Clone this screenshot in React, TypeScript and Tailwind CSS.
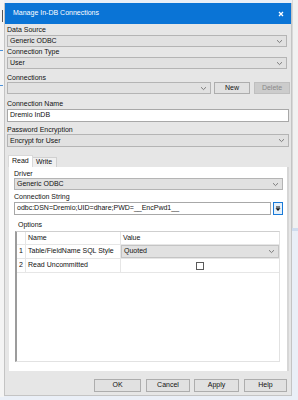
import React from "react";

const Chevron = () => (
  <svg width="7" height="5" viewBox="0 0 7 5" className="shrink-0">
    <path d="M1 1.2 L3.5 3.6 L6 1.2" fill="none" stroke="#707070" strokeWidth="0.9" />
  </svg>
);

const Select = ({ text, className = "" }: { text: string; className?: string }) => (
  <div
    className={`shrink-0 flex items-center justify-between bg-[#e1e1e1] border border-[#b4b4b4] pl-[2px] pr-[3px] ${className}`}
  >
    <span className="leading-[10px] text-[#111] whitespace-nowrap">{text}</span>
    <Chevron />
  </div>
);

const Label = ({ text, className = "" }: { text: string; className?: string }) => (
  <div className={`shrink-0 leading-[9px] h-[9px] text-[#111] whitespace-nowrap ${className}`}>{text}</div>
);

const Btn = ({ text, className = "", disabled = false }: { text: string; className?: string; disabled?: boolean }) => (
  <div
    className={`shrink-0 flex items-center justify-center border ${
      disabled ? "bg-[#cccccc] border-[#bfbfbf] text-[#8a8a8a]" : "bg-[#e1e1e1] border-[#adadad] text-[#111]"
    } ${className}`}
  >
    {text}
  </div>
);

export default function App() {
  return (
    <div
      className="w-[298px] h-[400px] bg-[#eaeff7] flex overflow-hidden text-[7px] text-[#111]"
      style={{ fontFamily: '"Liberation Sans", Arial, sans-serif' }}
    >
      {/* left background strip */}
      <div className="w-[4px] h-[397px] shrink-0 bg-[#f4f4f4] flex flex-col">
        <div className="h-[10px] shrink-0" />
        <div className="ml-[2px] w-[1px] h-[12px] bg-[#555] shrink-0" />
        <div className="h-[28px] shrink-0" />
        <div className="w-[3px] h-[1px] bg-[#4a90d9] shrink-0" />
        <div className="h-[34px] shrink-0" />
        <div className="w-[3px] h-[1px] bg-[#4a90d9] shrink-0" />
      </div>

      {/* dialog */}
      <div className="shrink-0 mt-[3px] w-[288px] h-[393px] bg-[#e6e6e6] border-x border-b border-[#c4c4c4] flex flex-col">
        <div className="shrink-0 h-[21px] bg-[#0a74d6] flex items-center justify-between pl-[8px] pr-[7px] text-white">
          <span className="text-[7px]">Manage In-DB Connections</span>
          <svg width="6" height="6" viewBox="0 0 6 6">
            <path d="M1 1 L5 5 M5 1 L1 5" stroke="#fff" strokeWidth="1.3" />
          </svg>
        </div>

        <div className="flex flex-col pl-[2px] pr-[3px]">
          <Label text="Data Source" className="mt-[1px] h-[10px] leading-[10px]" />
          <Select text="Generic ODBC" className="h-[12px] mr-[1px]" />

          <Label text="Connection Type" className="h-[10px] leading-[10px]" />
          <Select text="User" className="h-[12px] mr-[1px]" />

          <Label text="Connections" className="mt-[4px]" />
          <div className="shrink-0 flex items-center h-[12px]">
            <Select text="" className="w-[204px] h-[12px]" />
            <Btn text="New" className="ml-[3px] w-[36px] h-[12px]" />
            <Btn text="Delete" disabled className="ml-[4px] w-[36px] h-[12px]" />
          </div>

          <Label text="Connection Name" className="mt-[5px]" />
          <div className="shrink-0 mt-[1px] h-[13px] bg-white border border-[#a8a8a8] flex items-center pl-[2px] mr-[-1px]">
            Dremio InDB
          </div>

          <Label text="Password Encryption" className="mt-[3px]" />
          <Select text="Encrypt for User" className="h-[13px] mr-[-1px]" />

          {/* tabs */}
          <div className="shrink-0 mt-[8px] flex items-end h-[12px] pl-[1px]">
            <div className="h-[12px] w-[25px] bg-white border-t border-l border-r border-[#d9d9d9] flex items-center pl-[3px]">
              Read
            </div>
            <div className="h-[10px] w-[24px] bg-[#f0f0f0] border-t border-r border-[#d0d0d0] flex items-center pl-[3px]">
              Write
            </div>
          </div>
          <div className="shrink-0 h-[204px] ml-[2px] w-[280px] bg-white border-r-2 border-[#d6d6d6] flex flex-col pl-[5px] pr-[4px]">
            <Label text="Driver" className="mt-[2px]" />
            <Select text="Generic ODBC" className="h-[12px]" />

            <Label text="Connection String" className="mt-[2px]" />
            <div className="shrink-0 flex mt-[1px] h-[13px]">
              <div className="flex-1 bg-white border border-[#a8a8a8] flex items-center pl-[2px] whitespace-nowrap">
                odbc:DSN=Dremio;UID=dhare;PWD=__EncPwd1__
              </div>
              <div className="ml-[2px] w-[10px] h-[13px] border border-[#1a7ad8] bg-[#e5f1fb] flex items-center justify-center">
                <svg width="6" height="6" viewBox="0 0 6 6">
                  <rect x="1" y="0.5" width="4" height="1" fill="#111" />
                  <path d="M0.5 2.2 L5.5 2.2 L3 5 Z" fill="#111" />
                </svg>
              </div>
            </div>

            <Label text="Options" className="mt-[5px] pl-[4px]" />
            <div className="shrink-0 mt-[2px] ml-[1px] mr-[3px] h-[131px] bg-white border-t border-t-[#cfcfcf] border-l-2 border-l-[#9c9c9c] border-r border-r-[#e2e2e2] border-b border-b-[#e2e2e2] flex flex-col">
              <div className="shrink-0 flex h-[13px] border-b border-[#e6e6e6]">
                <div className="w-[9px] border-r border-[#e6e6e6]" />
                <div className="w-[95px] border-r border-[#e6e6e6] flex items-center pl-[2px]">Name</div>
                <div className="flex-1 flex items-center pl-[2px]">Value</div>
              </div>
              <div className="shrink-0 flex h-[14px] border-b border-[#e6e6e6]">
                <div className="w-[9px] border-r border-[#e6e6e6] flex items-center pl-[2px]">1</div>
                <div className="w-[95px] border-r border-[#e6e6e6] flex items-center pl-[2px] whitespace-nowrap">
                  Table/FieldName SQL Style
                </div>
                <div className="flex-1 flex items-center justify-between bg-[#e1e1e1] border border-[#c4c4c4] pl-[2px] pr-[3px]">
                  <span>Quoted</span>
                  <Chevron />
                </div>
              </div>
              <div className="shrink-0 flex h-[14px] border-b border-[#e6e6e6]">
                <div className="w-[9px] border-r border-[#e6e6e6] flex items-center pl-[2px]">2</div>
                <div className="w-[95px] border-r border-[#e6e6e6] flex items-center pl-[2px] whitespace-nowrap">
                  Read Uncommitted
                </div>
                <div className="flex-1 flex items-center justify-center">
                  <div className="w-[8px] h-[8px] border border-[#5a5a5a] bg-white" />
                </div>
              </div>
            </div>
          </div>

          {/* buttons */}
          <div className="shrink-0 mt-[8px] flex h-[13px] pl-[87px]">
            <Btn text="OK" className="w-[47px] h-[13px]" />
            <Btn text="Cancel" className="ml-[5px] w-[44px] h-[13px]" />
            <Btn text="Apply" className="ml-[4px] w-[45px] h-[13px]" />
            <Btn text="Help" className="ml-[5px] w-[43px] h-[13px]" />
          </div>
        </div>
      </div>

      {/* right strip */}
      <div className="w-[6px] shrink-0 h-full flex flex-col">
        <div className="h-[228px] bg-[#f1f1f1] border-l border-[#d8d8d8] shrink-0" />
        <div className="h-[3px] bg-[#cfdcee] shrink-0" />
      </div>
    </div>
  );
}
